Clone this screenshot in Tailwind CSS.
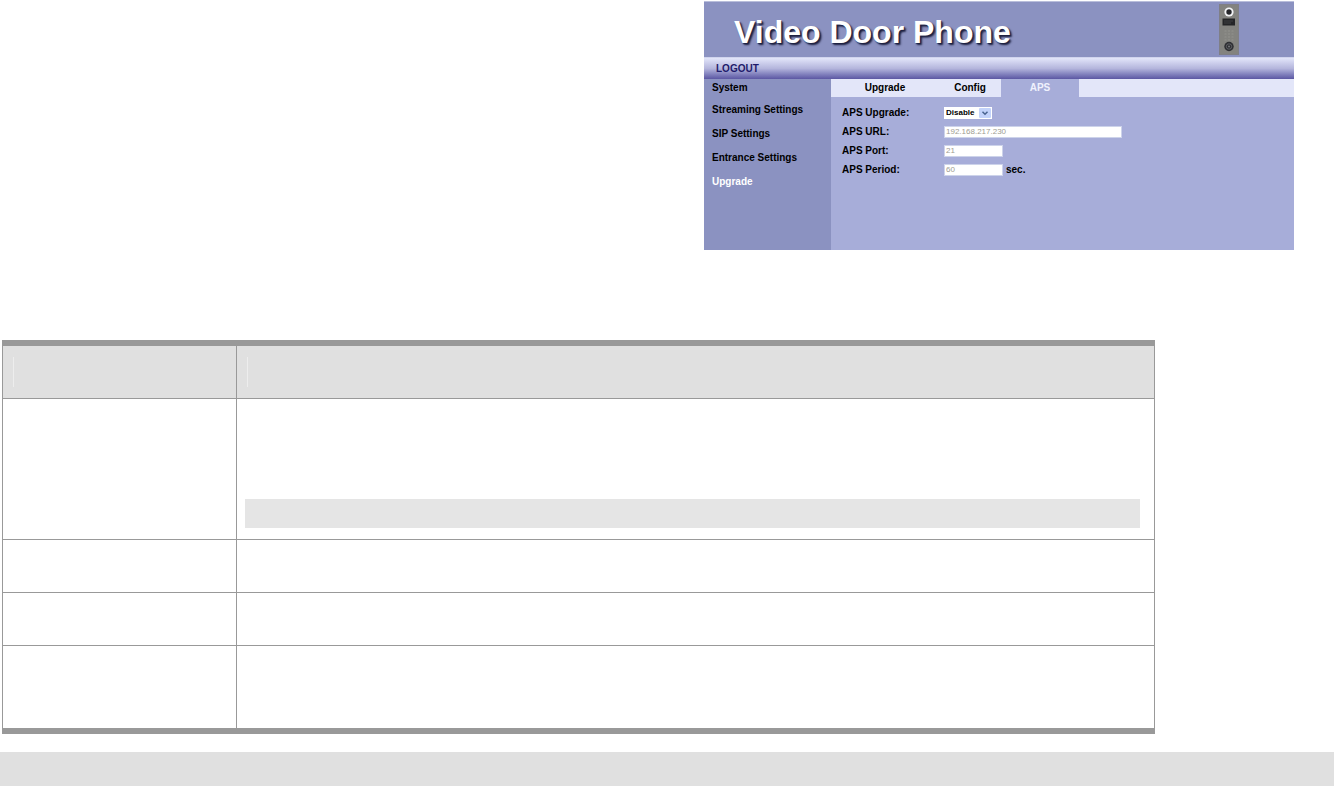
<!DOCTYPE html>
<html lang="en">

<head>
    <meta charset="UTF-8">
    <meta name="viewport" content="width=device-width, initial-scale=1.0">
    <title>Video Door Phone - APS</title>
    <script src="https://cdn.jsdelivr.net/npm/@tailwindcss/browser@4"></script>
</head>

<body class="bg-white text-black font-['Liberation_Sans',Arial,sans-serif]">
    <!-- Device web console -->
    <section class="mt-px ml-auto mr-10 w-full max-w-[590px] text-[10px] leading-3 font-bold">
        <header class="flex h-14 items-center justify-between border-t border-[#b9bedb] bg-[#8b92c1] pl-[30px] pr-[55px]">
            <h1 class="pt-1 text-[32px] leading-10 text-white [text-shadow:2px_2px_2px_#1d2040,1px_1px_1px_#2d3157]">Video Door Phone</h1>
            <svg class="h-[51px] w-5" viewBox="0 0 20 51" aria-hidden="true">
                <rect width="20" height="51" fill="#7f7f86" />
                <rect x="1" y="1" width="18" height="49" fill="#83837f" />
                <circle cx="10" cy="8" r="4.6" fill="#f2f3f5" />
                <circle cx="10" cy="8" r="2.7" fill="#25262a" />
                <rect x="3.5" y="14.5" width="12.5" height="7" fill="#242527" />
                <path d="M5 17h9M5 19h7" stroke="#4a4b4e" stroke-width=".7" />
                <path d="M5.500 27h9M5.500 30h9M5.500 33h9M5.500 36h9" stroke="#92928e" stroke-width="1" stroke-dasharray="2 1.5" />
                <circle cx="10" cy="42.5" r="4.7" fill="#2e2f33" />
                <circle cx="10" cy="42.5" r="2.7" fill="none" stroke="#63646a" stroke-width=".9" />
                <circle cx="10" cy="42.5" r="1" fill="#77787d" />
            </svg>
        </header>
        <div class="flex h-[22px] items-center border-t border-[#d0d4ee] bg-linear-to-b from-[#e3e6fa] via-[#b4b5dc] to-[#5c57a3] pl-3">
            <a href="#" class="text-[#1f1b6b]">LOGOUT</a>
        </div>
        <div class="flex h-[171px]">
            <nav class="flex w-[127px] shrink-0 flex-col gap-3 bg-[#8b92c1] pl-2 pt-[3px]">
                <a href="#" class="-mb-[2px]">System</a>
                <a href="#">Streaming Settings</a>
                <a href="#">SIP Settings</a>
                <a href="#">Entrance Settings</a>
                <a href="#" class="text-white">Upgrade</a>
            </nav>
            <main class="grow bg-[#a7add9]">
                <nav class="flex h-[18px] bg-[#e3e6f9] text-center leading-[18px]">
                    <a href="#" class="w-[108px]">Upgrade</a>
                    <a href="#" class="w-[62px]">Config</a>
                    <a href="#" class="w-[78px] bg-[#a7add9] text-[#f0f2fd]">APS</a>
                </nav>
                <form class="pl-[11px] pt-[6px]">
                    <div class="flex h-[19px] items-center">
                        <label for="aps-upgrade" class="w-[102px]">APS Upgrade:</label>
                        <div class="relative h-3 w-12">
                            <select id="aps-upgrade" class="block h-3 w-12 appearance-none bg-white pl-[2px] text-[8px] leading-3 font-bold">
                                <option>Disable</option>
                                <option>Enable</option>
                            </select>
                            <svg class="pointer-events-none absolute right-px top-0 h-3 w-3" viewBox="0 0 12 12" aria-hidden="true">
                                <rect y="1" width="12" height="10" rx="1" fill="#c3d3fa" />
                                <path d="M3.5 4.8L6 7.2L8.5 4.8" fill="none" stroke="#4a648f" stroke-width="1.5" />
                            </svg>
                        </div>
                    </div>
                    <div class="flex h-[19px] items-center">
                        <label for="aps-url" class="w-[102px]">APS URL:</label>
                        <input id="aps-url" type="text" value="192.168.217.230" disabled class="h-3 w-[178px] border border-[#cdd3ea] bg-white pl-px text-[8px] font-normal text-[#a09d92]">
                    </div>
                    <div class="flex h-[19px] items-center">
                        <label for="aps-port" class="w-[102px]">APS Port:</label>
                        <input id="aps-port" type="text" value="21" disabled class="h-3 w-[59px] border border-[#cdd3ea] bg-white pl-px text-[8px] font-normal text-[#a09d92]">
                    </div>
                    <div class="flex h-[19px] items-center">
                        <label for="aps-period" class="w-[102px]">APS Period:</label>
                        <input id="aps-period" type="text" value="60" disabled class="h-3 w-[59px] border border-[#cdd3ea] bg-white pl-px text-[8px] font-normal text-[#a09d92]">
                        <span class="pl-[3px]">sec.</span>
                    </div>
                </form>
            </main>
        </div>
    </section>

    <!-- Field descriptions -->
    <div class="mt-[90px] ml-[2px] mr-[179px] border-y-[6px] border-[#999999]">
        <table class="w-full table-fixed border-separate border-spacing-0">
            <colgroup>
                <col class="w-[234px]">
                <col>
            </colgroup>
            <thead>
                <tr class="h-[53px] bg-[#e0e0e0]">
                    <th class="border-b border-l border-[#999999] p-0 pl-[10px]"><div class="h-[30px] border-l border-[#ededed]"></div></th>
                    <th class="border-x border-b border-[#999999] p-0 pl-[10px]"><div class="h-[30px] border-l border-[#ededed]"></div></th>
                </tr>
            </thead>
            <tbody>
                <tr class="h-[141px]">
                    <td class="border-b border-l border-[#999999] p-0"></td>
                    <td class="border-x border-b border-[#999999] p-0 pb-[11px] pl-2 pr-[14px] align-bottom"><div class="h-[29px] bg-[#e5e5e5]"></div></td>
                </tr>
                <tr class="h-[53px]">
                    <td class="border-b border-l border-[#999999] p-0"></td>
                    <td class="border-x border-b border-[#999999] p-0"></td>
                </tr>
                <tr class="h-[53px]">
                    <td class="border-b border-l border-[#999999] p-0"></td>
                    <td class="border-x border-b border-[#999999] p-0"></td>
                </tr>
                <tr class="h-[82px]">
                    <td class="border-l border-[#999999] p-0"></td>
                    <td class="border-x border-[#999999] p-0"></td>
                </tr>
            </tbody>
        </table>
    </div>

    <footer class="mt-[18px] h-[34px] bg-[#e0e0e0]"></footer>
</body>

</html>
